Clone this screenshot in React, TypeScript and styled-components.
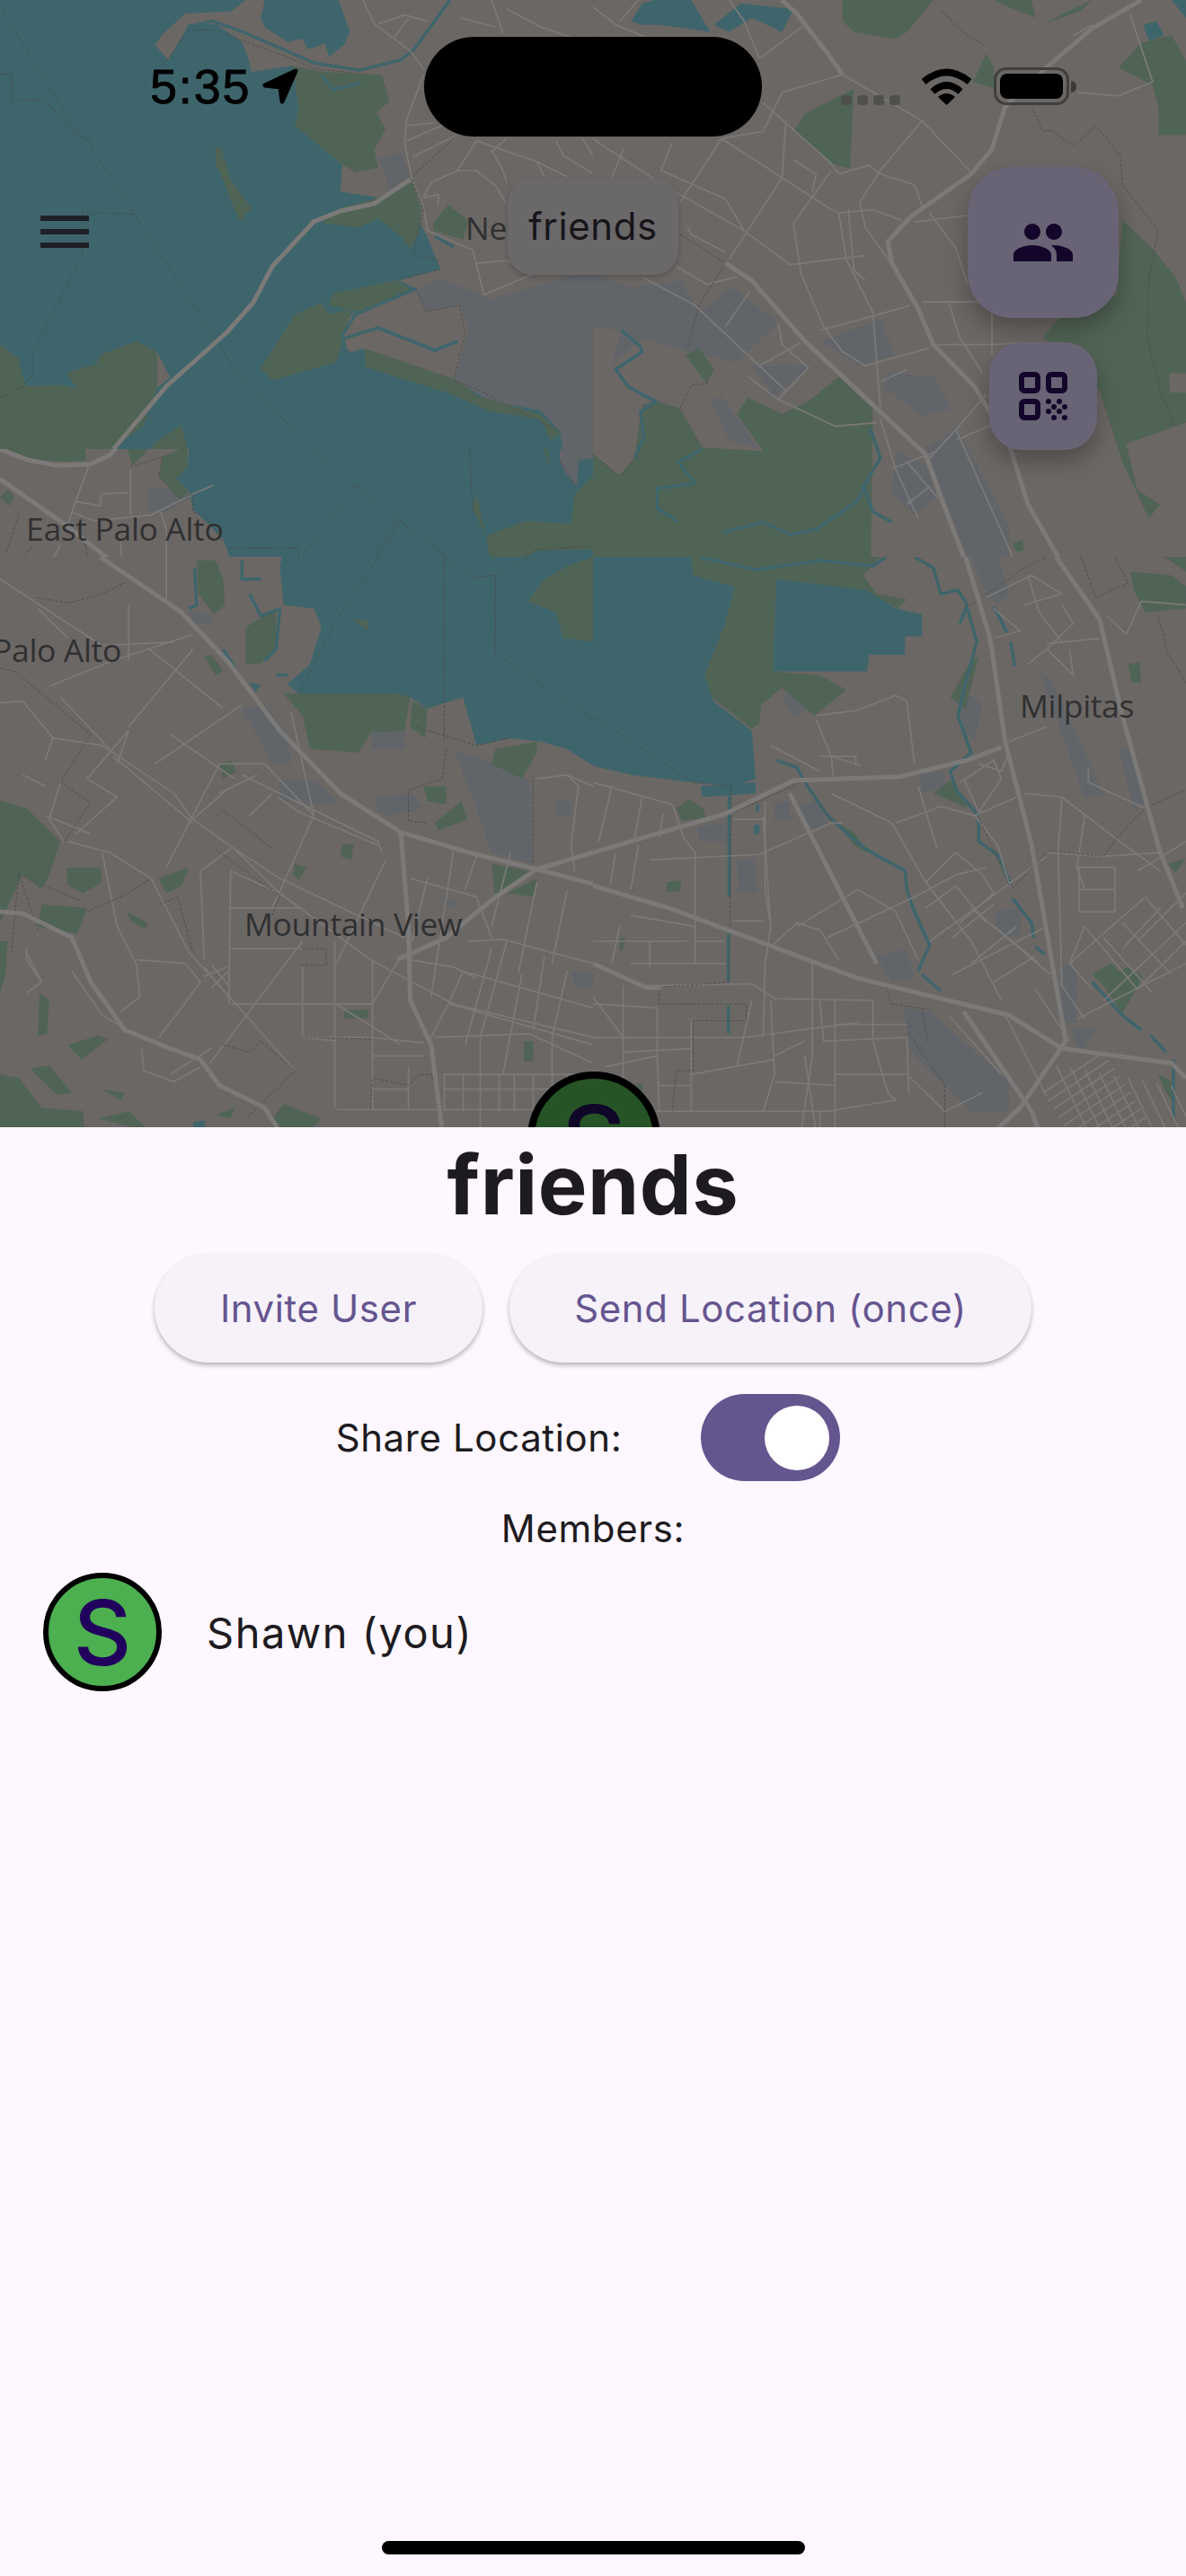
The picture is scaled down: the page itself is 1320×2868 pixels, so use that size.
import React from "react";
import styled, { createGlobalStyle } from "styled-components";

const GlobalStyle = createGlobalStyle`
  html, body { margin: 0; padding: 0; background: #fef7ff; }
  body { font-family: "Inter", "Liberation Sans", sans-serif; }
`;

const LAND = "#6b6765";
const WATER = "#3e656c";
const GREEN = "#506455";
const POND = "#61656a";
const ROAD = "#7c7a78";

// each tile of the map is traced in its own coordinates, then scaled into place
type Tile = {
  origin: [number, number];
  scale: [number, number];
  clip: [number, number, number, number];
  water?: string[];
  land?: string[];
  pond?: string[];
  green?: string[];
  river?: string[];
  street?: string[];
  main?: string[];
  border?: string[];
};

const meshA = Array.from({ length: 9 }, (_, i) => `${1225 + i * 38},${1375 + i * 7} ${1310 + i * 38},${1556 + i * 7}`);
const meshB = Array.from({ length: 9 }, (_, i) => `${1190 + i * 14},${1450 + i * 22} ${1350 + i * 14},${1340 + i * 22}`);

const TILES: Tile[] = [
  {
    origin: [0, 0],
    scale: [2.376, 3],
    clip: [0, 0, 660, 500],
    water: ["0,0 1568,0 1568,1500 0,1500"],
    land: [
      "895,0 1568,0 1568,1500 1490,1500 1480,1440 1430,1370 1300,1340 1200,1270 965,1165 925,1175 890,1130 930,1050 1100,965 1055,935 1165,900 1130,790 1110,745 1000,660 900,640 905,550 830,470 780,420 790,360 775,220 665,240 655,190 640,140 570,80 500,80 445,200 410,150 430,115 490,45 610,38 650,0 700,0 690,60 700,90 760,140 800,130 815,165 860,145 870,190 910,150 925,105",
      "415,1175 450,1260 415,1295",
      "225,1475 300,1475 300,1500 225,1500",
    ],
    pond: [
      "1000,530 1060,510 1085,590 1030,630",
      "1100,965 1165,930 1300,1000 1568,900 1568,1500 1490,1500 1480,1440 1430,1370 1300,1340 1200,1270 1240,1100 1215,1020 1130,1040",
    ],
    green: [
      "775,220 850,240 1010,250 1030,340 995,375 1020,430 990,500 1000,560 940,575 905,550 830,470 780,420 790,360",
      "570,490 585,495 610,600 665,695 635,740 610,670 590,600 570,545",
      "850,745 900,695 1000,660 1090,610 1115,700 1105,780 1085,830 1060,790 1000,730 950,760",
      "1145,745 1185,685 1240,735 1225,800 1145,770",
      "690,1230 780,1050 850,1010 870,1050 930,1030 890,1210 720,1270",
      "880,980 1050,935 1090,970 950,1040 870,1020",
      "965,1165 1200,1265 1260,1320 1430,1385 1480,1450 1455,1470 1430,1400 1300,1375 1180,1310 1050,1260 965,1225",
      "0,1150 50,1200 60,1260 70,1290 165,1285 205,1300 175,1245 255,1215 265,1185 360,1140 415,1175 415,1295 380,1420 300,1500 0,1500",
      "410,1480 480,1420 495,1500 400,1500",
    ],
    river: [
      "495,90 560,70 640,105 740,160 830,210 950,235 1060,200 1095,165 1190,0",
      "850,250 880,300 955,275",
      "910,1130 1000,1095 1150,1170 1210,1140",
      "1100,965 940,1050 905,1120 915,1175",
      "1150,790 1200,825",
    ],
    street: [
      "960,0 990,80 1085,170 1120,230",
      "1120,250 1075,400 1070,480 1090,600 1120,690 1130,770 1250,835 1280,985 1400,920 1500,880",
      "1000,80 1070,50 1130,70",
      "1040,130 1080,60",
      "1075,420 1150,410",
      "1075,470 1205,400",
      "1090,525 1210,450",
      "1210,570 1260,570 1310,620 1340,680",
      "1260,470 1210,570 1140,610 1120,660 1160,650 1158,690",
      "1260,470 1420,540 1440,590",
      "1300,500 1330,570 1340,610",
      "1340,460 1300,510",
      "1470,470 1490,520 1568,580",
      "1420,540 1500,590",
      "1540,460 1568,520",
      "1300,0 1330,110",
      "1340,30 1430,90 1568,150",
      "1220,60 1310,90",
      "1260,880 1340,870 1380,900",
    ],
    main: ["300,1500 440,1290 600,1110 670,1010 720,890 830,740 900,705 990,680 1085,600"],
    border: [
      "0,20 190,415 230,470 650,1290 840,1500",
      "0,248 30,248 30,335 120,335 180,420 230,470 440,205 500,100 570,100 650,140 760,190 830,230 950,245",
      "215,710 355,715",
      "218,710 218,850 85,1180 85,1250 60,1290 0,1330",
      "1090,590 1210,450",
      "1090,600 1120,700 1090,850 1160,870",
      "1055,935 1165,900",
      "1100,965 1125,1040 1215,1020 1230,1110 1200,1270 1260,1300 1480,1440",
    ],
  },
  {
    origin: [660, 0],
    scale: [2.376, 2.529],
    clip: [660, 0, 660, 620],
    water: [
      "100,60 130,10 160,0 260,0 310,90 180,70 130,70",
      "320,70 390,10 530,25 500,90 420,50 360,90",
      "1455,70 1490,60 1510,100 1470,115",
      "1530,0 1568,0 1568,50",
    ],
    pond: [
      "100,810 230,790 280,880 250,990 130,950",
      "280,880 370,810 490,910 380,1020 250,990",
      "420,1030 570,1030 510,1090 480,1120",
      "600,960 760,900 800,1000 700,1030 650,990",
      "780,1050 900,1060 950,1150 870,1170 770,1090",
      "880,1270 960,1200 1100,1480 1100,1568 990,1568",
      "800,1270 880,1310 910,1400 850,1450 790,1390",
      "310,1130 340,1115 440,1265 360,1240",
      "0,770 100,810 130,950 50,1030 75,930 0,920",
      "660,1120 700,1110 730,1220 650,1235",
    ],
    green: [
      "0,1280 70,1340 110,1290 130,1140 170,1130 230,1150 290,1260 450,1270 380,1165 410,1120 500,1165 570,1130 650,1060 700,1110 740,1150 735,1568 0,1568",
      "245,1000 280,980 320,1040 300,1080",
      "660,0 900,0 870,40 830,90 800,110 690,90 660,60",
      "1060,0 1160,0 1170,50 1100,20",
      "1190,70 1250,35 1320,0 1290,30",
      "530,370 560,320 690,250 680,475 630,460",
      "1450,120 1530,100 1568,170 1568,380 1495,380 1495,300 1480,240 1390,190",
      "1005,230 1040,150 1060,190 1060,250",
      "1190,950 1230,900 1385,830 1400,620 1480,700 1540,780 1568,850 1568,1050 1525,1050 1525,1105 1568,1105 1568,1190 1410,1250 1440,1380 1500,1420 1470,1460 1400,1300 1340,1100 1260,1000",
      "1110,1530 1135,1520 1140,1550 1120,1555",
    ],
    river: [
      "75,930 125,975 130,990 60,1040 95,1090 165,1130 125,1160 135,1230 110,1290",
      "290,1265 225,1300 270,1360 170,1375 170,1430 225,1470",
      "340,1500 450,1470 520,1505 590,1490 700,1410 720,1365",
      "735,1210 760,1290 715,1370 740,1440 790,1470",
    ],
    street: [
      "0,20 60,70 130,100",
      "70,60 120,0",
      "130,100 220,150",
      "360,0 400,60 440,165",
      "440,165 560,70 530,30",
      "620,150 660,210 870,340 1000,485",
      "660,210 500,260 450,370 340,390 230,570",
      "870,340 760,480 705,570 720,640 800,760",
      "450,290 630,460 650,490 730,465 760,490 850,520 870,580",
      "510,340 500,500 360,730",
      "0,390 40,420 200,530 400,650 520,745 720,720",
      "80,420 50,500",
      "210,400 180,480 350,560 400,650",
      "630,480 530,630 550,770 610,920 660,990 720,1030 890,980",
      "340,390 630,590 650,600 740,590 815,620",
      "650,600 670,730 740,880 760,1150",
      "675,590 690,760 720,790",
      "600,930 740,890 840,860",
      "440,1030 550,965",
      "410,1060 490,1125 570,1035 500,970 490,910",
      "490,1125 640,1200 750,1190",
      "130,780 270,860 440,1030 510,1100",
      "350,920 415,820",
      "760,1075 830,1040",
      "1000,850 940,850 970,950 1030,1050",
      "870,850 1000,850 1060,850",
      "910,970 1060,970 1130,965",
      "1055,880 1055,1000",
      "850,625 1000,605",
      "890,600 960,700 990,800",
      "760,1180 800,1320 860,1460",
      "790,1320 910,1270",
      "830,1420 890,1370",
      "830,1300 910,1400",
      "960,1210 1110,1568",
      "890,1290 960,1210 1040,1110",
      "960,1240 1090,1180",
      "1420,40 1480,230 1390,270 1280,260",
      "1270,100 1320,70",
      "220,750 300,800 380,780",
      "250,640 260,660 350,710",
      "530,450 590,490 580,540",
    ],
    main: [
      "1450,0 1320,80 1210,180 1090,300 1055,420 1000,490 840,610 780,680 790,740 860,870 900,970 1010,1090 1100,1250 1150,1420 1230,1568",
      "350,740 420,790 560,960 880,1280 920,1400 980,1568",
      "660,210 620,150 540,40 500,0",
    ],
    border: [
      "1160,300 1190,370 1210,365 1270,410 1330,355 1395,440 1400,520 1495,650 1470,780 1465,950 1500,1100 1540,1200",
      "350,740 280,860 250,980",
      "230,660 350,740",
      "920,30 990,100 1040,130",
      "230,1150 260,1085 305,1080",
      "0,1280 70,1340 110,1290",
    ],
  },
  {
    origin: [0, 490],
    scale: [2.376, 3],
    clip: [0, 500, 660, 120],
    water: ["490,0 1568,0 1568,420 0,420"],
    land: ["0,0 490,0 500,20 495,90 465,130 500,170 510,230 590,330 610,400 640,400 730,420 0,420"],
    pond: [
      "390,160 470,160 510,190 440,240 390,240",
      "1480,0 1568,0 1568,60 1530,70 1525,155 1495,110 1480,70",
    ],
    green: [
      "0,30 70,60 150,72 230,70 220,0 0,0",
      "330,0 410,0 380,50 350,85",
      "430,55 495,20 495,90 465,130 500,170 475,195 420,120",
      "0,190 20,165 38,190 25,220",
      "1285,320 1390,270 1510,280 1520,180 1568,120 1568,365 1420,370 1350,420 1300,420",
      "1250,230 1260,180 1285,320",
      "1430,0 1445,0 1455,95",
    ],
    street: [
      "235,85 200,205 180,280",
      "200,205 265,220 268,180 340,175",
      "190,240 250,270 400,250 510,180 565,150",
      "425,240 440,300 440,420",
      "320,340 320,420",
      "160,350 130,420",
      "345,100 345,250",
    ],
    main: ["0,30 70,65 150,85 240,80 290,50 320,10", "0,130 170,280 310,420"],
    border: [
      "345,90 430,55 420,120 475,195 510,180 510,240 540,250 590,340",
      "50,250 15,380",
      "225,345 235,420",
      "40,420 90,350",
      "800,0 940,150 1210,420",
      "940,150 790,405 790,360 600,360",
      "1060,270 985,420",
      "1050,265 975,420",
      "1240,0 1250,230",
      "1480,70 1525,155",
      "1350,420 1420,365 1568,355",
    ],
  },
  {
    origin: [0, 620],
    scale: [2.376, 2.43],
    clip: [0, 620, 660, 635],
    water: [
      "745,0 1568,0 1568,565 1500,520 1430,500 1350,490 1260,510 1225,380 1130,410 1085,380 1050,370 900,380 790,370 760,345 820,290 850,190 830,140 750,130 740,30",
      "800,390 880,390 880,420 850,450 810,420",
      "660,340 690,345 675,365",
      "510,1530 540,1525 545,1556 515,1556",
    ],
    pond: [
      "640,410 700,400 760,480 770,560 720,560",
      "740,600 840,610 900,670 740,660",
      "990,650 1090,640 1120,680 1030,700 1000,690",
      "1470,660 1510,655 1510,705 1470,700",
      "500,145 560,160 560,180 510,180",
      "980,470 1070,470 1070,520 985,520",
      "1170,925 1220,935 1180,950",
      "1510,1120 1568,1130 1568,1170 1520,1160",
      "1200,520 1400,600 1410,830 1300,800 1260,680",
    ],
    green: [
      "1395,120 1440,60 1500,25 1568,0 1568,230 1490,220 1470,150",
      "520,10 570,10 590,60 595,130 565,155 525,100",
      "650,190 730,140 730,250 690,290 650,290",
      "930,170 970,170 975,200",
      "750,370 1050,370 1085,380 1070,470 980,475 950,530 820,520 800,430",
      "1090,390 1130,410 1125,490 1085,460",
      "1310,520 1420,500 1420,530 1380,600 1300,560",
      "580,560 610,550 625,580 590,600",
      "905,780 935,775 930,820 900,810",
      "780,830 810,840 790,875 775,860",
      "1120,620 1180,620 1180,670 1130,660",
      "1150,720 1220,660 1235,710 1160,740",
      "1300,830 1400,850 1330,900 1310,920",
      "1340,910 1420,870 1410,920",
      "540,270 560,265 590,310 570,320",
      "420,870 500,840 480,890 440,910",
      "910,1225 975,1225 975,1248 910,1248",
      "1385,1310 1410,1310 1410,1365 1385,1365",
      "0,660 70,680 160,770 130,860 110,900 60,860 0,990",
      "175,840 265,840 270,880 220,910 180,890",
      "110,940 230,950 205,1020 100,1000",
      "0,1040 20,1040 15,1130 0,1180",
      "105,1180 130,1200 125,1290 100,1295",
      "180,1320 260,1295 285,1305 215,1360",
      "80,1385 130,1375 190,1450 150,1455",
      "0,1400 50,1410 110,1490 220,1500 225,1556 0,1556",
      "260,1520 340,1500 400,1556",
      "570,1510 620,1490 610,1520",
      "720,1520 750,1480 850,1520 820,1556 720,1556",
      "270,1440 330,1450 320,1470",
      "335,960 390,990 385,1008 345,985",
    ],
    river: [
      "515,30 520,130 500,140",
      "640,10 640,60 690,60",
      "660,100 690,160 740,140 730,250 700,280",
      "590,250 620,300",
      "730,320 760,320",
    ],
    street: [
      "0,60 270,240 460,230",
      "130,350 300,280 510,210",
      "395,250 590,410",
      "340,460 510,250",
      "0,395 60,390 140,490 120,550",
      "270,510 460,640 510,710 620,790 740,910 980,1090 1200,1210 1568,1300",
      "180,770 290,800 400,870 500,1070 650,1240 780,1390",
      "410,560 640,400",
      "230,600 340,470 310,560",
      "200,750 310,650 230,600",
      "440,840 580,560 700,560",
      "580,640 680,590",
      "510,710 600,630",
      "640,590 1000,770 1010,800",
      "735,650 790,690 1000,780",
      "830,700 720,950",
      "620,790 740,870 1070,1030",
      "610,850 605,1210",
      "530,850 540,1090",
      "610,1060 800,1060",
      "610,1210 985,1210",
      "800,1040 600,1310 555,1370",
      "885,1040 885,1490",
      "985,1090 985,1495",
      "985,1210 1060,1080",
      "890,1100 1020,820",
      "365,1090 490,1100 530,1150 480,1220 420,1300",
      "270,800 310,1000 360,1100 370,1190 320,1230",
      "70,1070 110,1150 70,1180",
      "375,1330 380,1390 460,1420 530,1380",
      "800,1300 985,1300 1120,1315",
      "890,1495 1568,1495",
      "985,1440 1080,1440",
      "1085,870 1260,920 1300,1030",
      "1200,790 1140,1190",
      "1260,810 1230,900",
      "1340,1040 1270,1300 1270,1556",
      "1190,1210 1568,1320",
      "1440,1080 1410,1280",
      "1240,1040 1330,1035 1568,1100",
      "1150,1300 1400,1290 1568,1370",
      "1175,1400 1568,1400",
      "1175,1400 1175,1500",
      "1225,1120 1190,1200 1140,1300",
      "1360,1400 1360,1500",
      "1460,1300 1460,1500",
      "1350,800 1300,1000",
      "1500,590 1530,620 1510,780 1520,850",
      "1420,880 1370,1130",
      "1500,900 1460,1100",
      "1420,600 1500,590 1568,620",
      "540,1110 605,1190",
      "560,1105 605,1160",
      "540,1135 600,1110",
      "560,1165 605,1120",
      "100,140 180,220",
      "340,130 340,280",
      "440,0 440,120",
      "770,420 830,700",
      "1220,1120 1568,1220",
      "1300,1060 1230,1320",
      "1380,1130 1330,1400",
      "1500,1120 1460,1300",
      "1175,1440 1568,1440",
      "1225,1400 1225,1500",
      "1320,1400 1320,1500",
      "1410,1400 1410,1500",
      "1500,1400 1500,1500",
      "1085,1090 1200,1110 1260,1140",
      "1130,870 1090,1040",
      "700,560 830,700",
      "660,700 720,640",
      "450,480 620,600",
      "300,540 510,720",
      "160,380 290,520",
      "140,490 270,510",
      "60,590 120,620",
      "120,700 240,750",
      "160,610 130,710 170,770",
      "610,850 740,910",
      "530,850 610,790",
      "605,950 800,950",
      "800,1105 800,1300 890,1310",
      "890,1210 1060,1320",
      "70,1060 70,1090 110,1150",
      "190,1120 270,1240 320,1270",
      "450,1400 560,1330",
      "985,1350 1120,1350",
      "1080,1380 1080,1495",
    ],
    main: [
      "265,0 480,150 600,280 740,470 900,640 1060,745 1240,800 1420,845 1568,885",
      "1310,920 1420,845 1568,800",
      "1060,745 1080,1000 1085,1200 1140,1320 1170,1556",
      "0,960 60,965 190,1030 240,1150 330,1280 450,1330 530,1360 580,1430 700,1490 740,1556",
      "1050,1090 1180,1030 1310,920",
    ],
    border: [
      "100,110 180,125 270,100 330,70",
      "0,300 40,310 240,480 160,610 240,665 170,770",
      "570,790 660,860 740,915 720,970",
      "575,700 590,685 720,790",
      "230,960 330,915 400,870",
      "420,940 470,920 510,1070",
      "100,1010 50,860 210,930",
      "800,1060 860,1060 865,1105 795,1105",
      "795,1300 985,1305",
      "1180,520 1170,600 1080,630 1080,715 1130,720",
      "1100,460 1260,510 1350,490",
      "1410,590 1410,830",
      "980,1495 985,1410 1080,1430 1110,1400 1140,1400 1160,1470",
      "590,1320 660,1340 690,1310 780,1390 730,1440 650,1520",
      "30,1070 50,850",
      "1000,0 890,170 790,370",
      "1175,0 1175,500",
      "1310,50 1310,260 1568,440",
      "1180,0 1250,55 1310,50 1400,0",
    ],
  },
  {
    origin: [660, 620],
    scale: [2.376, 2.43],
    clip: [660, 620, 660, 635],
    water: [
      "0,0 260,0 265,50 375,80 350,180 295,320 310,350 318,390 420,470 430,600 370,620 265,610 100,590 0,565",
      "285,620 430,610 430,640 290,650",
      "485,60 720,85 800,140 870,155 870,215 825,215 825,265 730,265 725,310 475,310",
      "425,725 440,725 440,750 425,750",
    ],
    pond: [
      "275,730 355,720 355,770 280,770",
      "380,820 425,815 435,905 385,905",
      "480,665 520,660 520,710 480,715",
      "540,680 590,660 620,720 570,740",
      "1000,0 1070,0 1100,100 1070,130 1040,100",
      "860,590 930,580 930,620 870,640",
      "965,350 1030,400 1010,500 975,470",
      "1180,310 1210,330 1350,640 1300,650",
      "1390,520 1420,520 1460,670 1430,680",
      "750,1080 830,1060 850,1140 790,1150",
      "1060,960 1130,950 1130,1020 1080,1030",
      "1260,1270 1330,1280 1290,1340",
      "820,1220 890,1230 1100,1420 1100,1500 1000,1500 840,1340",
      "1240,1100 1280,1110 1280,1260 1240,1260",
      "500,380 540,355 590,400 530,430",
    ],
    green: [
      "260,0 760,0 715,50 750,100 830,115 805,140 720,90 485,60 475,310 600,320 670,360 585,430 500,355 445,400 440,450 420,465 315,380 295,320 350,180 375,80 265,50",
      "945,380 1000,280 1020,270 985,410",
      "900,640 950,600 990,680",
      "1320,1130 1370,1100 1390,1120 1415,1110 1455,1135 1400,1235 1350,1160",
      "220,680 255,655 290,680 300,705 235,715",
      "195,880 232,875 232,905 195,905",
      "1420,40 1530,50 1568,80 1568,140 1460,150 1430,90",
      "1415,290 1445,285 1450,340 1425,340",
      "1495,1400 1530,1420 1530,1470 1510,1440",
      "70,1030 85,1030 80,1065 70,1065",
      "110,1425 130,1425 130,1450",
      "1510,0 1568,0 1568,40",
      "1520,830 1568,815 1540,855",
      "650,725 690,745 725,800 690,780",
      "1010,760 1070,800 1105,880 1060,800",
    ],
    river: [
      "280,0 430,35 600,10 740,25 775,0",
      "850,0 900,30 920,100 965,90 990,130 970,180",
      "990,140 1015,230 985,340 965,430 1000,530 945,580 960,630 1020,700",
      "1020,710 1020,770 1075,810 1105,890",
      "1110,925 1160,990 1165,1030",
      "1170,1055 1195,1075",
      "1060,135 1095,205",
      "1105,230 1115,295",
      "485,550 540,570 560,610 620,700 720,790 825,850 830,900 850,960 890,1050 860,1120",
      "870,1130 920,1175",
      "360,640 360,920",
      "358,1020 358,1150",
      "358,1215 358,1290",
      "435,670 435,690",
      "1320,1150 1400,1240 1450,1280",
      "1475,1295 1515,1340",
      "1535,1360 1535,1520",
    ],
    street: [
      "0,610 210,670 240,760 270,800 270,1100",
      "50,620 15,770",
      "130,650 110,760",
      "185,695 175,760",
      "150,820 440,805 630,720 660,720",
      "60,800 45,890",
      "120,780 100,900",
      "70,1000 50,1100",
      "455,660 455,900 470,1000",
      "140,1160 180,1160 420,1155 480,1195 740,1200",
      "520,640 660,930 750,1100",
      "540,1000 700,900 800,960 860,1090",
      "540,990 600,1010 650,1090",
      "620,1030 850,920 960,860 1040,840",
      "630,640 790,720 880,880 1000,1040 1080,1200",
      "910,790 860,620",
      "890,1040 1040,930 1200,810",
      "1060,910 970,990",
      "800,720 920,675 1010,700 1120,650",
      "950,1130 1200,1000",
      "1140,640 1240,650 1380,760 1500,850",
      "1010,700 1070,780 1105,900",
      "1200,800 1350,810 1500,800",
      "1230,800 1240,1160 1300,1250",
      "1285,840 1380,840 1380,960 1285,960 1285,840",
      "1285,900 1380,900",
      "1260,1100 1460,920",
      "1300,1000 1440,1170",
      "1440,1170 1568,1040",
      "1460,920 1568,1050",
      "1350,1200 1568,990",
      "1040,110 1160,50 1240,100 1140,130",
      "1060,140 1130,200 1060,220",
      "1200,235 1340,220",
      "1150,290 1200,250 1270,180 1240,130",
      "1200,250 1270,320 1260,250",
      "1360,160 1410,210 1450,120 1568,130",
      "1310,570 1310,610 1460,680",
      "1100,500 1200,460",
      "970,610 1060,550 1080,600 1020,690 980,600",
      "590,430 700,415 800,375 830,390 850,560",
      "590,440 630,540 710,565",
      "470,510 600,580",
      "600,540 695,540 695,565",
      "630,540 635,590",
      "0,1190 80,1300",
      "0,1300 400,1300 700,1260",
      "80,1160 80,1500",
      "30,1380 170,1350 175,1500",
      "170,1220 170,1350",
      "260,1250 260,1500",
      "0,1500 620,1500 800,1470",
      "470,1200 480,1400 450,1500",
      "640,1200 640,1556",
      "600,1200 610,1310 830,1300",
      "740,1310 780,1450 800,1470",
      "830,1300 835,1450",
      "380,1380 420,1200",
      "480,1350 560,1310",
      "560,1350 590,1556",
      "830,1400 930,1500 1030,1450",
      "1170,1170 1260,1310",
      "1090,1240 1200,1460",
      "940,1240 1080,1400",
      "450,700 470,1000 455,1100 450,1300",
      "580,1100 580,1350 550,1556",
      "370,710 455,710",
      "0,1040 250,1040",
      "100,970 270,1000",
      "150,1040 150,1110",
      "100,1100 350,1100",
      "270,1040 350,1040",
      "370,985 450,985",
      "470,1055 540,990",
      "0,1210 170,1220",
      "80,1340 260,1330",
      "170,1430 260,1430",
      "260,1400 480,1360",
      "640,1265 830,1265",
      "740,1200 740,1300",
      "640,1400 830,1400",
      "480,1420 640,1430",
      "600,1500 600,1556",
      "880,880 960,800",
      "960,800 1030,860 1060,910",
      "880,950 960,890 1040,990",
      "950,1030 1060,940",
      "1000,1100 1120,1000",
      "1060,1150 1170,1080",
      "1100,530 1080,580 1020,560",
      "1150,50 1180,150 1240,230",
      "1240,650 1230,800",
      "1300,700 1280,840 1300,900",
      "1440,850 1568,770",
      "1500,950 1400,1060",
      "1568,910 1440,1040",
      "1300,1000 1260,1100 1320,1170",
      "1350,1030 1480,1180",
      "1400,990 1530,1130",
      "1280,1250 1568,1100",
      "1060,1000 1210,1130",
      "1000,950 1180,1100",
      ...meshA,
      ...meshB,
    ],
    main: [
      "0,800 350,695 530,605 810,595 990,550 1080,515",
      "985,0 1050,220 1090,500 1160,780 1240,1250 1250,1310 1130,1490 1060,1556",
      "1225,0 1340,170 1400,430 1500,800 1560,950",
      "0,890 200,950 700,1140 1100,1240 1240,1330 1530,1370 1568,1410",
      "0,1100 140,1165 180,1165",
      "980,1230 1160,1500 1180,1556",
      "520,640 650,900 750,1100",
    ],
    border: [
      "265,610 365,620 365,695 360,1150 175,1165 175,1210 405,1210 405,1255 265,1255 265,1390 220,1390 210,1500",
      "365,695 560,605 630,715",
      "770,1150 790,1210 895,1225",
      "830,1260 885,1310 870,1225",
      "835,1290 930,1430 930,1556",
      "1020,705 1105,900 1205,795 1350,810 1385,760 1460,680 1568,630",
      "0,430 265,610",
      "1000,130 1140,30 1200,0",
      "1290,0 1330,110 1415,70 1380,0",
      "1495,160 1520,260 1568,340",
    ],
  },
];

const LABELS: { text: string; x: number; y: number }[] = [
  { text: "Newark", x: 518, y: 267 },
  { text: "East Palo Alto", x: 29, y: 602 },
  { text: "Palo Alto", x: -8, y: 737 },
  { text: "Milpitas", x: 1135, y: 799 },
  { text: "Mountain View", x: 272, y: 1042 },
];

const QR_DOTS = [
  [33, 33],
  [45, 33],
  [39, 39],
  [51, 39],
  [33, 44],
  [45, 44],
  [39, 51],
  [51, 51],
];

const Page = styled.div`
  width: 1320px;
  height: 2868px;
  display: flex;
  flex-direction: column;
  position: relative;
  overflow: hidden;
  background: #fef7ff;
`;

const MapArea = styled.div`
  height: 1255px;
  flex: none;
  position: relative;
  overflow: hidden;
  background: ${LAND};
`;

const MapCanvas = styled.svg`
  display: block;
  width: 1320px;
  height: 1255px;
`;

const MapLabel = styled.text`
  font-family: "Open Sans", sans-serif;
  font-size: 35.5px;
  letter-spacing: -0.35px;
  fill: #303031;
`;

const Island = styled.div`
  position: absolute;
  left: 472px;
  top: 41px;
  width: 376px;
  height: 111px;
  border-radius: 56px;
  background: #000;
`;

const StatusBar = styled.div`
  position: absolute;
  left: 167px;
  right: 130px;
  top: 75px;
  height: 42px;
  display: flex;
  align-items: center;
  justify-content: space-between;
`;

const StatusGroup = styled.div`
  display: flex;
  align-items: center;
`;

const Clock = styled.span`
  font-family: "Liberation Sans", sans-serif;
  font-size: 54px;
  letter-spacing: 1.8px;
  line-height: 42px;
  color: #000;
  -webkit-text-stroke: 0.9px #000;
`;

const CellDots = styled.div`
  display: flex;
  gap: 6px;
  margin-top: 31px;
  margin-right: 23px;
`;

const CellDot = styled.span`
  width: 12px;
  height: 11px;
  border-radius: 4px;
  background: #4f4f4d;
`;

const Battery = styled.div`
  width: 84px;
  height: 42px;
  box-sizing: border-box;
  margin-left: 24px;
  padding: 4px;
  border: 3px solid #3f3f3e;
  border-radius: 14px;
  position: relative;
  &::after {
    content: "";
    position: absolute;
    right: -11px;
    top: 12px;
    width: 6px;
    height: 13px;
    border-radius: 0 6px 6px 0;
    background: #3a3a39;
  }
`;

const BatteryFill = styled.div`
  width: 100%;
  height: 100%;
  border-radius: 8px;
  background: #000;
`;

const MenuButton = styled.div`
  position: absolute;
  left: 45px;
  top: 240px;
  width: 54px;
  display: flex;
  flex-direction: column;
  gap: 9px;
`;

const MenuBar = styled.span`
  height: 6px;
  background: #1f1f26;
`;

const TitleChip = styled.div`
  position: absolute;
  left: 565px;
  top: 198px;
  width: 190px;
  height: 108px;
  border-radius: 27px;
  display: flex;
  align-items: center;
  justify-content: center;
  padding-bottom: 2px;
  box-sizing: border-box;
  background: #6b686a;
  box-shadow: 0 3px 6px rgba(0, 0, 0, 0.2);
  font-size: 42px;
  letter-spacing: 0.6px;
  color: #17151a;
`;

const FabColumn = styled.div`
  position: absolute;
  left: 1077px;
  top: 186px;
  width: 168px;
  display: flex;
  flex-direction: column;
  align-items: center;
  gap: 27px;
`;

const Fab = styled.div<{ $size: number; $radius: number }>`
  width: ${(p) => p.$size}px;
  height: ${(p) => p.$size}px;
  border-radius: ${(p) => p.$radius}px;
  display: flex;
  align-items: center;
  justify-content: center;
  background: #696475;
  box-shadow: 0 12px 24px rgba(0, 0, 0, 0.28);
`;

const Marker = styled.div`
  position: absolute;
  left: 587px;
  top: 1193px;
  width: 148px;
  height: 148px;
  box-sizing: border-box;
  padding-top: 8px;
  border: 8px solid #000;
  border-radius: 50%;
  display: flex;
  align-items: center;
  justify-content: center;
  background: #265426;
  font-size: 112px;
  font-weight: 500;
  color: #0f0628;
`;

const Sheet = styled.div`
  flex: 1;
  position: relative;
  display: flex;
  flex-direction: column;
  align-items: center;
  background: #fef7ff;
`;

const Title = styled.h1`
  margin: 0;
  height: 141px;
  font-size: 92px;
  line-height: 128px;
  font-weight: 700;
  letter-spacing: 0.5px;
  color: #1d1b20;
`;

const ButtonRow = styled.div`
  display: flex;
  gap: 30px;
`;

const PillButton = styled.div<{ $width: number }>`
  width: ${(p) => p.$width}px;
  height: 121px;
  border-radius: 61px;
  display: flex;
  align-items: center;
  justify-content: center;
  background: #f7f2fa;
  box-shadow: 0 3px 5px rgba(0, 0, 0, 0.28);
  font-size: 42px;
  letter-spacing: 0.6px;
  color: #65558f;
`;

const ShareRow = styled.div`
  margin-top: 35px;
  padding-right: 11px;
  display: flex;
  align-items: center;
  gap: 88px;
`;

const BodyText = styled.span`
  font-size: 42px;
  line-height: 54px;
  letter-spacing: 0.6px;
  color: #1d1b20;
`;

const SwitchTrack = styled.div`
  width: 155px;
  height: 97px;
  box-sizing: border-box;
  padding-right: 12px;
  border-radius: 49px;
  display: flex;
  align-items: center;
  justify-content: flex-end;
  background: #65558f;
`;

const SwitchThumb = styled.div`
  width: 72px;
  height: 72px;
  border-radius: 50%;
  background: #fff;
`;

const MembersHeading = styled(BodyText)`
  margin-top: 26px;
`;

const MemberList = styled.div`
  align-self: stretch;
  margin-top: 22px;
  padding-left: 48px;
`;

const MemberRow = styled.div`
  display: flex;
  align-items: center;
  gap: 50px;
`;

const Avatar = styled.div`
  width: 132px;
  height: 132px;
  box-sizing: border-box;
  border: 6px solid #000;
  border-radius: 50%;
  display: flex;
  align-items: center;
  justify-content: center;
  background: #4caf50;
  font-size: 100px;
  font-weight: 500;
  color: #21005d;
`;

const MemberName = styled.span`
  font-size: 47px;
  letter-spacing: 1.5px;
  color: #1d1b20;
`;

const HomeIndicator = styled.div`
  position: absolute;
  left: 425px;
  bottom: 24px;
  width: 471px;
  height: 15px;
  border-radius: 8px;
  background: #000;
`;

function Shapes({ items, fill }: { items?: string[]; fill: string }) {
  return (
    <>
      {items?.map((points) => (
        <polygon key={points} points={points} fill={fill} />
      ))}
    </>
  );
}

function Lines({
  items,
  stroke,
  width,
  dash,
}: {
  items?: string[];
  stroke: string;
  width: number;
  dash?: string;
}) {
  return (
    <>
      {items?.map((points) => (
        <polyline
          key={points}
          points={points}
          fill="none"
          stroke={stroke}
          strokeWidth={width}
          strokeDasharray={dash}
          strokeLinejoin="round"
          vectorEffect="non-scaling-stroke"
        />
      ))}
    </>
  );
}

function MapDrawing() {
  return (
    <MapCanvas viewBox="0 0 1320 1255" aria-hidden="true">
      <defs>
        {TILES.map((t, i) => (
          <clipPath id={`tile-${i}`} key={i}>
            <rect x={t.clip[0]} y={t.clip[1]} width={t.clip[2]} height={t.clip[3]} />
          </clipPath>
        ))}
      </defs>
      {TILES.map((t, i) => (
        <g key={i} clipPath={`url(#tile-${i})`}>
          <g transform={`translate(${t.origin[0]} ${t.origin[1]}) scale(${1 / t.scale[0]} ${1 / t.scale[1]})`}>
            <Shapes items={t.water} fill={WATER} />
            <Shapes items={t.land} fill={LAND} />
            <Shapes items={t.pond} fill={POND} />
            <Shapes items={t.green} fill={GREEN} />
            <Lines items={t.river} stroke={WATER} width={3.5} />
            <Lines items={t.street} stroke={ROAD} width={1.7} />
            <Lines items={t.border} stroke="#4b4b4b" width={0.9} dash="3 2" />
            <Lines items={t.main} stroke={ROAD} width={5} />
          </g>
        </g>
      ))}
      {LABELS.map((l) => (
        <MapLabel key={l.text} x={l.x} y={l.y}>
          {l.text}
        </MapLabel>
      ))}
    </MapCanvas>
  );
}

function PeopleIcon() {
  return (
    <svg width="72" height="72" viewBox="0 0 24 24" fill="#14062b">
      <path d="M16 11c1.66 0 2.99-1.34 2.99-3S17.66 5 16 5c-1.66 0-3 1.34-3 3s1.34 3 3 3zm-8 0c1.66 0 2.99-1.34 2.99-3S9.66 5 8 5C6.34 5 5 6.34 5 8s1.34 3 3 3zm0 2c-2.33 0-7 1.17-7 3.5V19h14v-2.5c0-2.33-4.67-3.5-7-3.5zm8 0c-.29 0-.62.02-.97.05 1.16.84 1.97 1.97 1.97 3.45V19h6v-2.5c0-2.33-4.67-3.5-7-3.5z" />
    </svg>
  );
}

function QrIcon() {
  return (
    <svg width="54" height="54" viewBox="0 0 54 54">
      <g fill="none" stroke="#14062b" strokeWidth="6">
        <rect x="3" y="3" width="18" height="18" rx="3" />
        <rect x="33" y="3" width="18" height="18" rx="3" />
        <rect x="3" y="33" width="18" height="18" rx="3" />
      </g>
      {QR_DOTS.map(([cx, cy]) => (
        <circle key={`${cx}-${cy}`} cx={cx} cy={cy} r="3" fill="#14062b" />
      ))}
    </svg>
  );
}

export default function App() {
  return (
    <Page>
      <GlobalStyle />
      <MapArea>
        <MapDrawing />
        <Marker>S</Marker>
        <Island />
        <StatusBar>
          <StatusGroup>
            <Clock>5:35</Clock>
            <svg width="40" height="40" viewBox="0 0 40 40" style={{ marginLeft: 13 }}>
              <path
                d="M37 3 L3 19 L20 21 L22 37 Z"
                fill="#000"
                stroke="#000"
                strokeWidth="5"
                strokeLinejoin="round"
              />
            </svg>
          </StatusGroup>
          <StatusGroup>
            <CellDots>
              <CellDot />
              <CellDot />
              <CellDot />
              <CellDot />
            </CellDots>
            <svg width="57" height="42" viewBox="0 0 57 42">
              <g fill="none" stroke="#000" strokeWidth="7.5">
                <path d="M3 16 Q28.5 -5 54 16" />
                <path d="M13 27 Q28.5 13 44 27" />
              </g>
              <path d="M19 33 Q28.5 25 38 33 L28.5 42 Z" fill="#000" />
            </svg>
            <Battery>
              <BatteryFill />
            </Battery>
          </StatusGroup>
        </StatusBar>
        <MenuButton>
          <MenuBar />
          <MenuBar />
          <MenuBar />
        </MenuButton>
        <TitleChip>friends</TitleChip>
        <FabColumn>
          <Fab $size={168} $radius={50}>
            <PeopleIcon />
          </Fab>
          <Fab $size={120} $radius={36}>
            <QrIcon />
          </Fab>
        </FabColumn>
      </MapArea>
      <Sheet>
        <Title>friends</Title>
        <ButtonRow>
          <PillButton $width={365}>Invite User</PillButton>
          <PillButton $width={581}>Send Location (once)</PillButton>
        </ButtonRow>
        <ShareRow>
          <BodyText>Share Location:</BodyText>
          <SwitchTrack>
            <SwitchThumb />
          </SwitchTrack>
        </ShareRow>
        <MembersHeading>Members:</MembersHeading>
        <MemberList>
          <MemberRow>
            <Avatar>S</Avatar>
            <MemberName>Shawn (you)</MemberName>
          </MemberRow>
        </MemberList>
        <HomeIndicator />
      </Sheet>
    </Page>
  );
}
